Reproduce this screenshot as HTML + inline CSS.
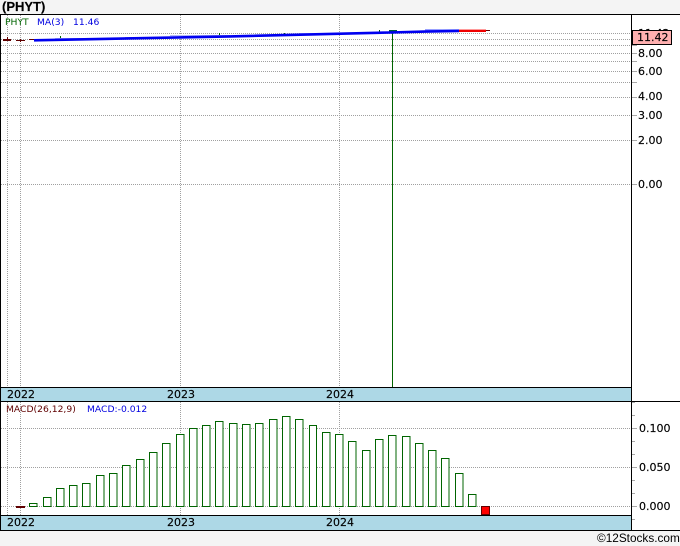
<!DOCTYPE html>
<html><head><meta charset="utf-8"><style>
html,body{margin:0;padding:0;background:#f4f4f4}
body{width:680px;height:546px;overflow:hidden}
svg{display:block}
text{font-family:"DejaVu Sans",sans-serif;font-size:11px;fill:#000;stroke:#000;stroke-width:.15px}
</style></head><body>
<svg width="680" height="546" viewBox="0 0 680 546">
<rect x="0" y="14" width="680" height="516" fill="#fff"/>
<g stroke="#a0a0a0" stroke-width="1" stroke-dasharray="1 1" fill="none" shape-rendering="crispEdges">
<path d="M1 33.5H632M1 39.5H632M1 45.5H632M1 53.5H632M1 61.5H632M1 71.5H632M1 82.5H632M1 97.5H632M1 115.5H632M1 140.5H632M1 184.5H632"/>
<path d="M1 428.5H632M1 467.5H632M1 506.5H632"/>
<path d="M7.5 15V387M20.5 15V387M180.5 15V387M339.5 15V387"/>
<path d="M7.5 402V515M20.5 402V515M180.5 402V515M339.5 402V515"/>
</g>
<g stroke="#a8a8a8" stroke-width="1" fill="none" shape-rendering="crispEdges">
<path d="M632 33.5H637M632 45.5H637M632 53.5H637M632 61.5H637M632 71.5H637M632 82.5H637M632 97.5H637M632 115.5H637M632 140.5H637M632 184.5H637"/>
<path d="M632 402.5H635M632 415.5H635M632 428.5H637M632 441.5H635M632 454.5H635M632 467.5H637M632 480.5H635M632 493.5H635M632 506.5H637M632 519.5H635"/>
</g>
<path d="M392.5 30V387" stroke="#006400" stroke-width="1" shape-rendering="crispEdges"/>
<g shape-rendering="crispEdges">
<rect x="3" y="39" width="8" height="2" fill="#600000"/><rect x="7" y="37" width="1" height="4" fill="#600000"/>
<rect x="16" y="40" width="9" height="1" fill="#600000"/><rect x="20" y="39" width="1" height="3" fill="#600000"/>
<rect x="29" y="39" width="5" height="1" fill="#600000"/>
<rect x="60" y="36" width="1" height="3" fill="#006400"/>
<rect x="219" y="33" width="1" height="2" fill="#006400"/>
<rect x="379" y="30" width="1" height="2" fill="#006400"/>
<rect x="284" y="33" width="1" height="1" fill="#006400"/>
<rect x="55" y="38" width="30" height="2" fill="#c0c4fa"/>
<rect x="70" y="38" width="55" height="1" fill="#a8aefa"/>
<rect x="125" y="37" width="45" height="1" fill="#9ca2f8"/>
<rect x="170" y="35" width="60" height="1" fill="#b4baf8"/>
<rect x="300" y="33" width="30" height="2" fill="#b4baf8"/>
<rect x="425" y="29" width="34" height="2" fill="#98a0ff"/>
<rect x="459" y="29" width="27" height="1" fill="#ff9a9a"/>
<rect x="389" y="30" width="8" height="2" fill="#005a40"/>
<rect x="459" y="30" width="27" height="2" fill="#f00000"/>
<rect x="486" y="30" width="4" height="1" fill="#600000"/>
</g>
<path d="M34 40.3L230 36.4L390 32.5L425 31.6L459 31" stroke="#0000f0" stroke-width="2.6" fill="none"/>
<rect x="1" y="388" width="630" height="13" fill="#add8e6"/>
<rect x="1" y="516" width="630" height="14" fill="#add8e6"/>
<g fill="#fff" stroke="#006400" stroke-width="1.2" shape-rendering="crispEdges">
<rect x="29.5" y="503.5" width="7.5" height="3"/>
<rect x="43.5" y="497.5" width="7.5" height="9"/>
<rect x="56.5" y="488.5" width="7.5" height="18"/>
<rect x="69.5" y="485.5" width="7.5" height="21"/>
<rect x="82.5" y="483.5" width="7.5" height="23"/>
<rect x="96.5" y="475.5" width="7.5" height="31"/>
<rect x="109.5" y="473.5" width="7.5" height="33"/>
<rect x="122.5" y="465.5" width="7.5" height="41"/>
<rect x="136.5" y="459.5" width="7.5" height="47"/>
<rect x="149.5" y="452.5" width="7.5" height="54"/>
<rect x="162.5" y="443.5" width="7.5" height="63"/>
<rect x="176.5" y="434.5" width="7.5" height="72"/>
<rect x="189.5" y="428.5" width="7.5" height="78"/>
<rect x="202.5" y="425.5" width="7.5" height="81"/>
<rect x="215.5" y="421.5" width="7.5" height="85"/>
<rect x="229.5" y="423.5" width="7.5" height="83"/>
<rect x="242.5" y="424.5" width="7.5" height="82"/>
<rect x="255.5" y="423.5" width="7.5" height="83"/>
<rect x="269.5" y="419.5" width="7.5" height="87"/>
<rect x="282.5" y="416.5" width="7.5" height="90"/>
<rect x="295.5" y="419.5" width="7.5" height="87"/>
<rect x="309.5" y="425.5" width="7" height="81"/>
<rect x="322.5" y="432.5" width="7.5" height="74"/>
<rect x="335.5" y="434.5" width="7.5" height="72"/>
<rect x="348.5" y="441.5" width="7.5" height="65"/>
<rect x="362.5" y="450.5" width="7.5" height="56"/>
<rect x="375.5" y="439.5" width="7.5" height="67"/>
<rect x="388.5" y="435.5" width="7.5" height="71"/>
<rect x="402.5" y="436.5" width="7.5" height="70"/>
<rect x="415.5" y="443.5" width="7.5" height="63"/>
<rect x="428.5" y="450.5" width="7.5" height="56"/>
<rect x="441.5" y="458.5" width="7.5" height="48"/>
<rect x="455.5" y="473.5" width="7.5" height="33"/>
<rect x="468.5" y="494.5" width="7.5" height="12"/>
</g>
<rect x="481.5" y="506.5" width="8" height="8" fill="#f00" stroke="#600000" stroke-width="1" shape-rendering="crispEdges"/>
<rect x="16" y="506" width="9" height="2" fill="#600000" shape-rendering="crispEdges"/>
<g fill="#000" shape-rendering="crispEdges">
<rect x="0" y="14" width="680" height="1"/>
<rect x="0" y="14" width="1" height="516"/>
<rect x="631" y="14" width="1" height="516"/>
<rect x="0" y="387" width="631" height="1"/>
<rect x="0" y="401" width="680" height="1"/>
<rect x="0" y="515" width="631" height="1"/>
<rect x="0" y="530" width="680" height="1"/>
</g>
<text x="2" y="11" style="font-family:'Liberation Sans',sans-serif;font-size:13px;font-weight:bold">(PHYT)</text>
<text x="5" y="25" style="font-size:9.2px;fill:#006400;stroke:none">PHYT</text>
<text x="37" y="25" style="font-size:9.2px;fill:#0000e0;stroke:none">MA(3)</text>
<text x="73" y="25" style="font-size:9.2px;fill:#0000e0;stroke:none">11.46</text>
<text x="6" y="412" style="font-size:9.2px;fill:#600000;stroke:none">MACD(26,12,9)</text>
<text x="87" y="412" style="font-size:9.2px;fill:#0000e0;stroke:none">MACD:-0.012</text>
<text x="7" y="398">2022</text><text x="167" y="398">2023</text><text x="326" y="398">2024</text>
<text x="7" y="526">2022</text><text x="167" y="526">2023</text><text x="326" y="526">2024</text>
<text x="638" y="57">8.00</text>
<text x="638" y="75">6.00</text>
<text x="638" y="100">4.00</text>
<text x="638" y="119">3.00</text>
<text x="638" y="144">2.00</text>
<text x="638" y="188">0.00</text>
<text x="639" y="432">0.100</text>
<text x="639" y="471">0.050</text>
<text x="639" y="510">0.000</text>
<text x="638" y="37">11.42</text>
<rect x="632.5" y="30.5" width="39" height="14" fill="#ffb0b0" stroke="#000" stroke-width="1" shape-rendering="crispEdges"/>
<text x="637" y="41">11.42</text>
<text x="597" y="542" style="font-family:'Liberation Sans',sans-serif;font-size:11.8px;stroke:none">©12Stocks.com</text>
</svg>
</body></html>
